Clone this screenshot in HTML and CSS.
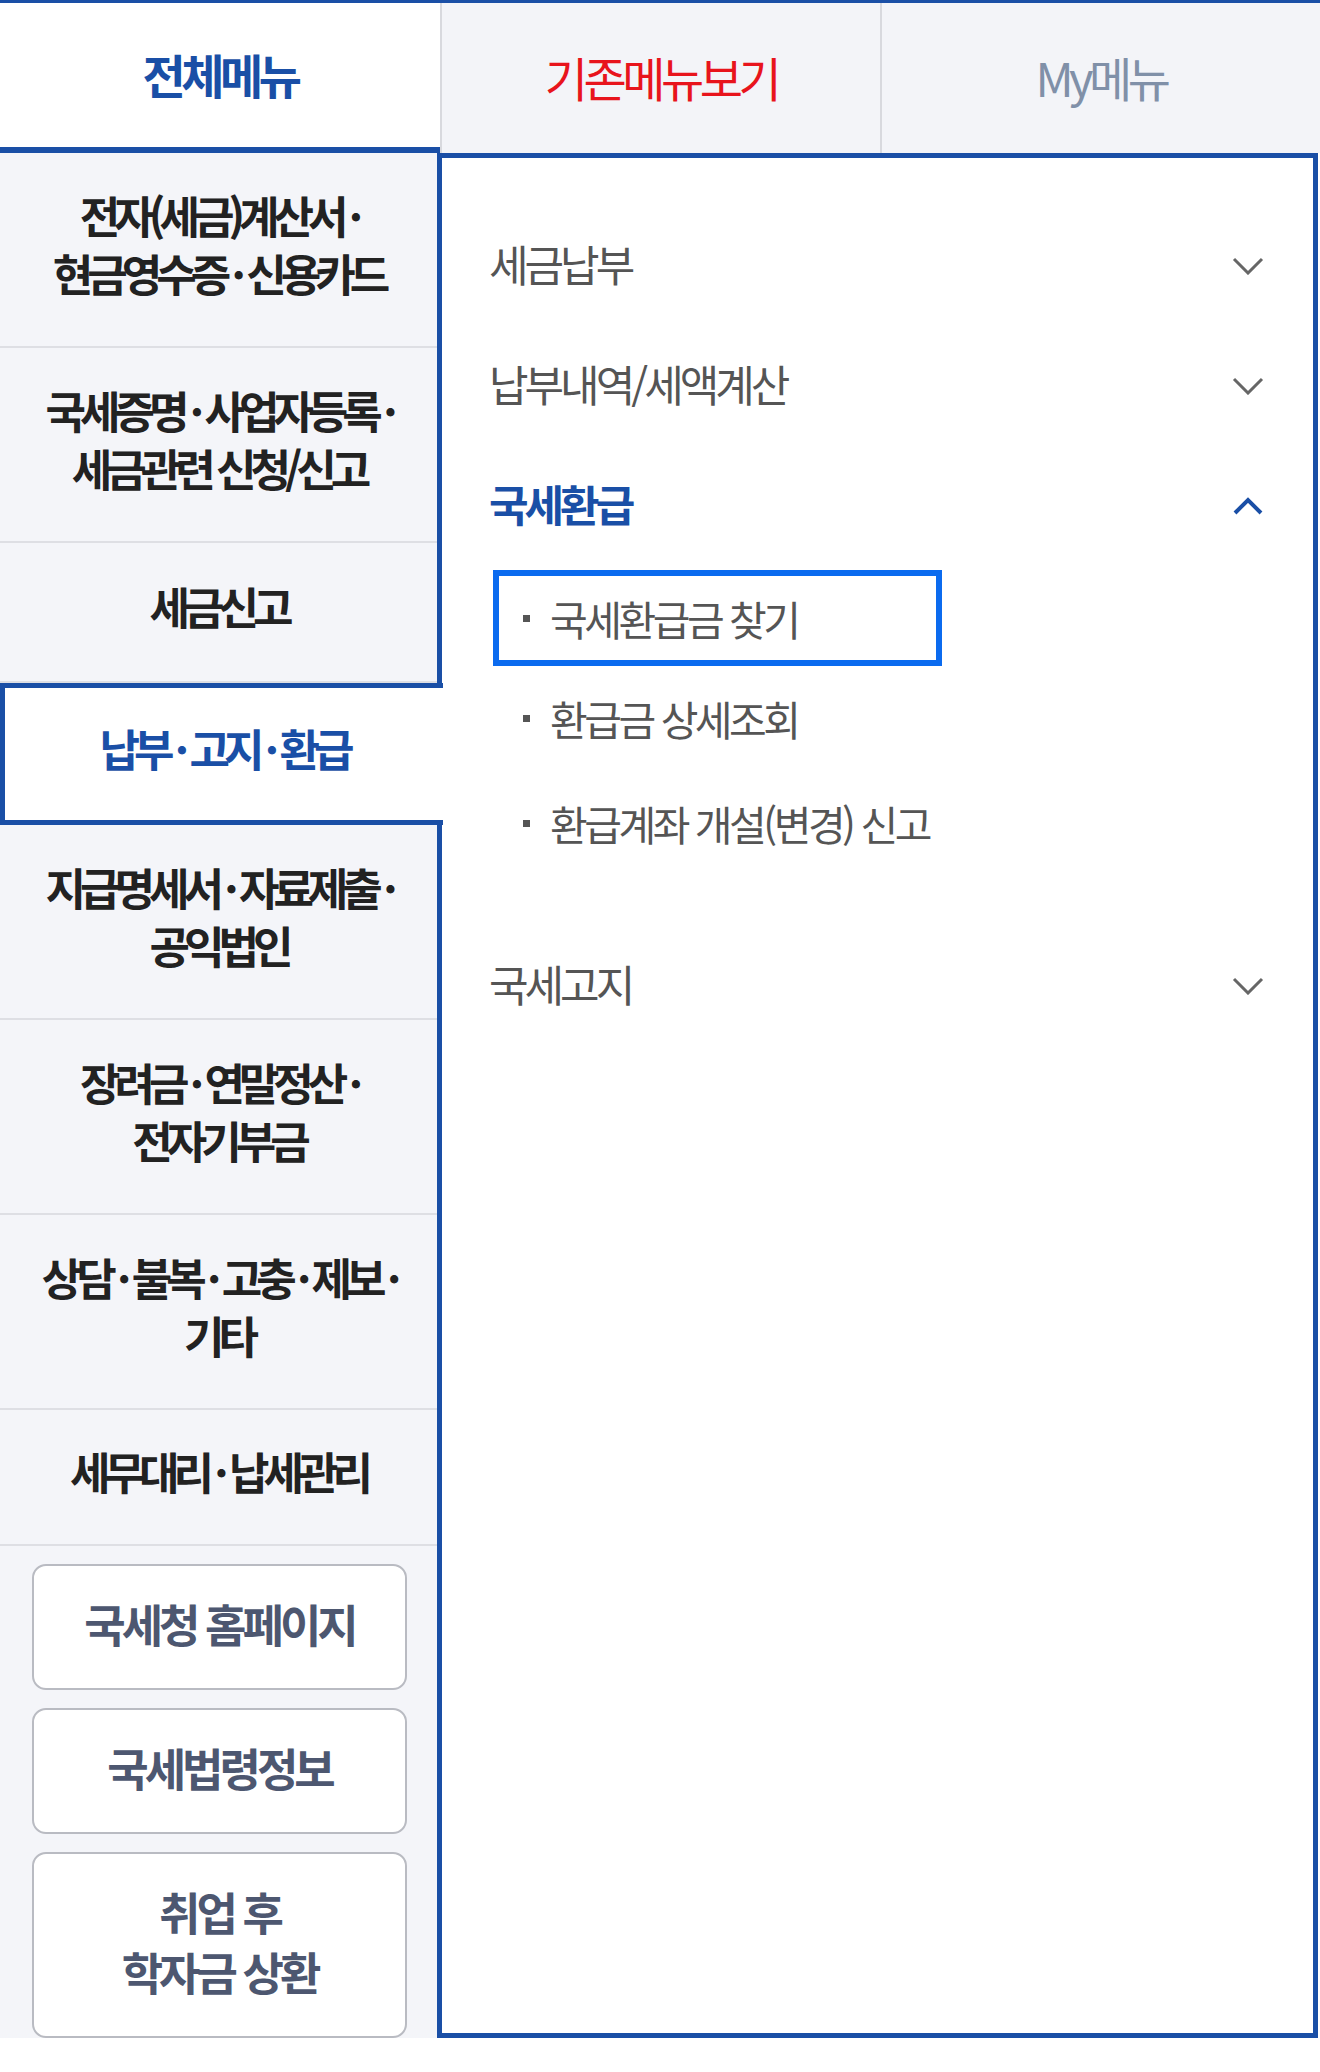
FILE: index.html
```html
<!DOCTYPE html>
<html lang="ko">
    <head>
        <meta charset="UTF-8">
        <meta name="viewport" content="width=device-width, initial-scale=1.0">
        <title>전체메뉴</title>
        <link rel="stylesheet" href="styles.css">
    </head>
    <body>
        <div class="menu">
            <!-- 상단 탭 -->
            <div class="tabs">
                <div class="tab active">전체메뉴</div>
                <div class="tab old">기존메뉴보기</div>
                <div class="tab my">My메뉴</div>
            </div>

            <div class="menu-body">
                <!-- 1depth 메뉴 -->
                <div class="depth1">
                    <div class="item">전자(세금)계산서 ·<br>현금영수증 · 신용카드</div>
                    <div class="item">국세증명 · 사업자등록 ·<br>세금관련 신청/신고</div>
                    <div class="item single">세금신고</div>
                    <div class="item on">납부 · 고지 · 환급</div>
                    <div class="item">지급명세서 · 자료제출 ·<br>공익법인</div>
                    <div class="item">장려금 · 연말정산 ·<br>전자기부금</div>
                    <div class="item">상담 · 불복 · 고충 · 제보 ·<br>기타</div>
                    <div class="item single last">세무대리 · 납세관리</div>

                    <div class="links">
                        <a class="link" href="#">국세청 홈페이지</a>
                        <a class="link" href="#">국세법령정보</a>
                        <a class="link tall" href="#">취업 후<br>학자금 상환</a>
                    </div>
                </div>

                <!-- 2depth 메뉴 -->
                <div class="panel">
                    <ul class="depth2">
                        <li class="row">
                            <span>세금납부</span>
                            <svg class="arrow" width="32" height="18" viewBox="0 0 32 18"><polyline points="2,2 16,16 30,2"/></svg>
                        </li>
                        <li class="row">
                            <span>납부내역/세액계산</span>
                            <svg class="arrow" width="32" height="18" viewBox="0 0 32 18"><polyline points="2,2 16,16 30,2"/></svg>
                        </li>
                        <li class="row open">
                            <span>국세환급</span>
                            <svg class="arrow" width="32" height="18" viewBox="0 0 32 18"><polyline points="3,16 16,3 29,16"/></svg>
                        </li>
                        <li class="sub">
                            <ul>
                                <li class="focus">국세환급금 찾기</li>
                                <li>환급금 상세조회</li>
                                <li>환급계좌 개설(변경) 신고</li>
                            </ul>
                        </li>
                        <li class="row">
                            <span>국세고지</span>
                            <svg class="arrow" width="32" height="18" viewBox="0 0 32 18"><polyline points="2,2 16,16 30,2"/></svg>
                        </li>
                    </ul>
                </div>
            </div>
        </div>
    </body>
</html>
```

FILE: styles.css
```css
body {
    margin: 0;
    background: #fff;
    font-family: "Noto Sans CJK KR", "Noto Sans", sans-serif;
}

.menu {
    width: 1320px;
    border-top: 3px solid #1a4fa6;
}

/* 탭 */
.tabs {
    display: grid;
    grid-template-columns: 440px 440px 440px;
    height: 150px;
}

.tab {
    display: flex;
    align-items: center;
    justify-content: center;
    padding-bottom: 4px;
    font-size: 47px;
    letter-spacing: -4.5px;
    background: #f3f4f8;
    border-left: 2px solid #d8d9de;
    color: #8090a8;
}

.tab.active {
    background: #fff;
    border-left: none;
    border-bottom: 6px solid #1a4fa6;
    color: #1a4fa6;
    font-weight: bold;
}

.tab.old {
    color: #e8141c;
}

/* 본문 */
.menu-body {
    display: grid;
    grid-template-columns: 437px 881px;
}

.depth1 {
    background: #f4f5f9;
}

.item {
    display: flex;
    align-items: center;
    justify-content: center;
    height: 195px;
    padding-bottom: 12px;
    box-sizing: border-box;
    border-bottom: 2px solid #dedfe4;
    text-align: center;
    white-space: nowrap;
    font-size: 44px;
    font-weight: bold;
    line-height: 58px;
    letter-spacing: -6px;
    color: #222;
}

.item.single {
    height: 140px;
}

.item.on {
    position: relative;
    z-index: 1;
    height: 142px;
    margin-right: -6px;
    background: #fff;
    border: 5px solid #1a4fa6;
    border-right: none;
    color: #1a4fa6;
}

.item.last {
    height: 136px;
}

.links {
    display: flex;
    flex-direction: column;
    gap: 18px;
    padding: 18px 30px 0 32px;
}

.link {
    display: flex;
    align-items: center;
    justify-content: center;
    height: 126px;
    padding-bottom: 6px;
    box-sizing: border-box;
    background: #fff;
    border: 2px solid #b9bbc2;
    border-radius: 14px;
    text-align: center;
    text-decoration: none;
    font-size: 45px;
    font-weight: 600;
    line-height: 60px;
    letter-spacing: -4px;
    color: #4d5770;
}

.link.tall {
    height: 186px;
}

/* 오른쪽 패널 */
.panel {
    background: #fff;
    border: 5px solid #1a4fa6;
}

.depth2 {
    list-style: none;
    margin: 0;
    padding: 48px 0 0 0;
}

.row {
    display: flex;
    align-items: center;
    justify-content: space-between;
    height: 120px;
    padding: 0 49px 0 47px;
    font-size: 43px;
    letter-spacing: -4px;
    color: #555;
}

.row span {
    padding-bottom: 6px;
}

.arrow polyline {
    fill: none;
    stroke: #666;
    stroke-width: 3;
}

.row.open {
    color: #1a4fa6;
    font-weight: bold;
}

.row.open .arrow polyline {
    stroke: #1a4fa6;
    stroke-width: 4;
}

.sub ul {
    list-style: none;
    margin: 0;
    padding: 0 0 51px 51px;
}

.sub li {
    display: flex;
    align-items: center;
    width: 449px;
    height: 96px;
    margin: 4px 0;
    padding-left: 30px;
    box-sizing: border-box;
    font-size: 41px;
    letter-spacing: -3.5px;
    color: #555;
    white-space: nowrap;
}

.sub li:last-child {
    margin-top: 9px;
}

.sub li::before {
    content: "";
    width: 7px;
    height: 7px;
    margin-right: 20px;
    background: #555;
    flex-shrink: 0;
}

.sub li.focus {
    border: 6px solid #0b6bef;
    padding-left: 24px;
}
```
